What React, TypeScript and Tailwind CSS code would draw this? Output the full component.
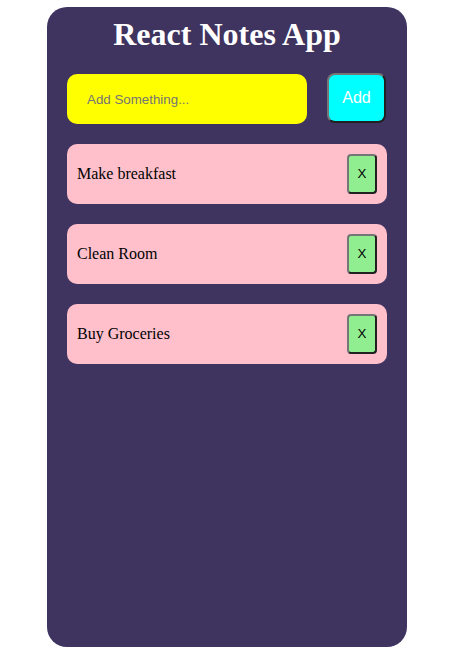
import { useState } from 'react';

type Note = { id: number; text: string };

const initialNotes: Note[] = [
  { id: 1, text: 'Make breakfast' },
  { id: 2, text: 'Clean Room' },
  { id: 3, text: 'Buy Groceries' },
];

export default function App() {
  const [notes, setNotes] = useState<Note[]>(initialNotes);
  const [value, setValue] = useState('');

  const addNote = () => {
    if (!value.trim()) return;
    setNotes([...notes, { id: Date.now(), text: value }]);
    setValue('');
  };

  return (
    <div className="min-h-screen bg-white pt-[7px] font-['Liberation_Serif',serif]">
      <div className="ml-[47px] w-[360px] h-[640px] rounded-[20px] bg-[#3f3360] px-5 pt-[9px]">
        {/* Header */}
        <h1 className="text-center text-[32px] font-bold leading-[37px] text-white">
          React Notes App
        </h1>

        {/* Input row */}
        <div className="mt-[20px] flex items-start gap-5">
          <input
            value={value}
            onChange={(e) => setValue(e.target.value)}
            placeholder="Add Something..."
            className="mt-px h-[50px] w-[240px] rounded-[10px] bg-[#ffff00] pl-5 font-['Liberation_Sans',Arial,sans-serif] text-[13.333px] text-black outline-none placeholder:text-[#757575]"
          />
          <button
            onClick={addNote}
            className="h-[50px] w-[59px] rounded-[8px] border-2 border-[#767676] [border-style:outset] bg-[#00ffff] font-['Liberation_Sans',Arial,sans-serif] text-[16px] text-white"
          >
            Add
          </button>
        </div>

        {/* Notes */}
        <div className="mt-5 flex flex-col gap-5">
          {notes.map((note) => (
            <div
              key={note.id}
              className="flex h-[60px] items-center justify-between rounded-[10px] bg-[#ffc0cb] px-[10px] text-[16px] text-black"
            >
              <span>{note.text}</span>
              <button
                onClick={() => setNotes(notes.filter((n) => n.id !== note.id))}
                className="h-[40px] w-[30px] rounded-[4px] border-2 border-[#767676] [border-style:outset] bg-[#90ee90] font-['Liberation_Sans',Arial,sans-serif] text-[13.333px] text-black"
              >
                X
              </button>
            </div>
          ))}
        </div>
      </div>
    </div>
  );
}
